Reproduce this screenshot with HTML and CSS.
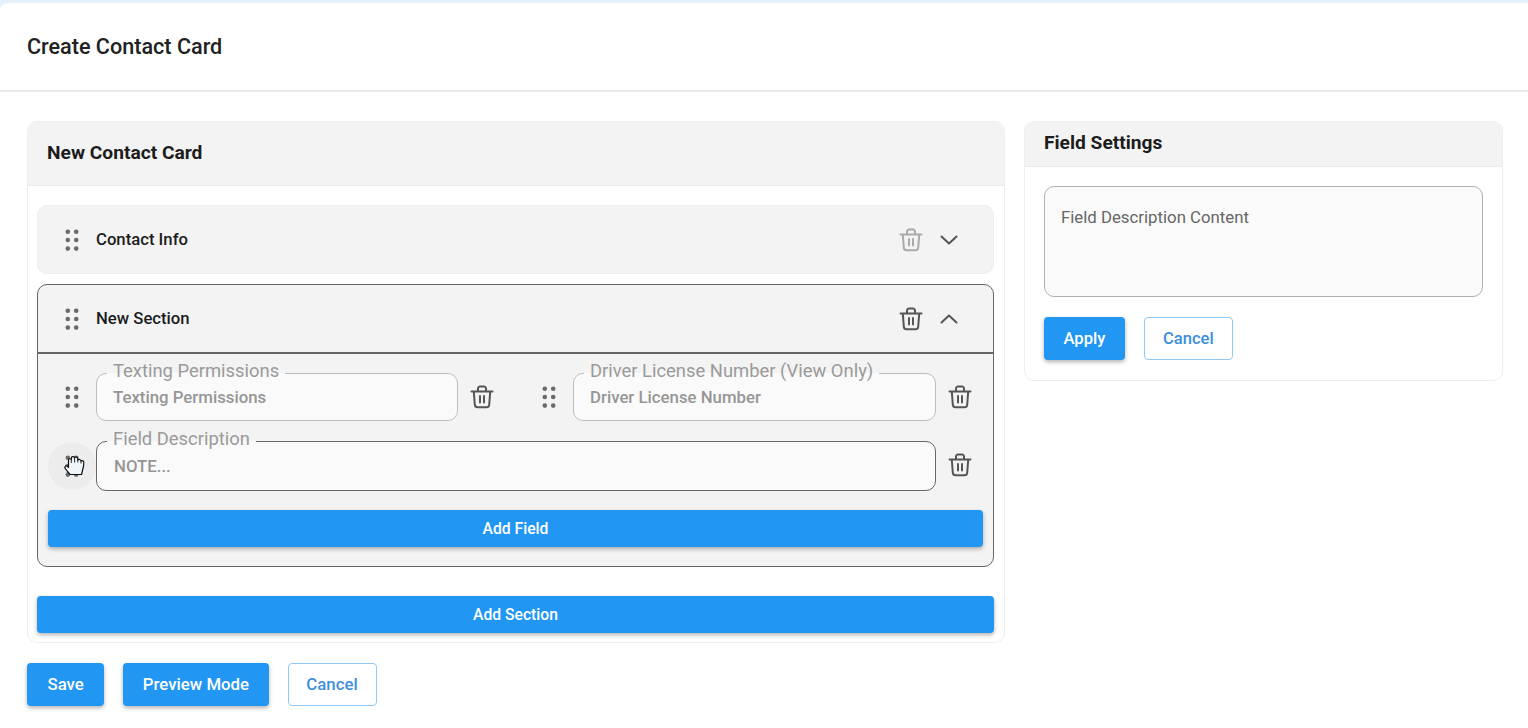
FILE: index.html
```html
<!DOCTYPE html>
<html lang="en">
<head>
<meta charset="utf-8">
<title>Create Contact Card</title>
<link rel="stylesheet" href="styles.css">
</head>
<body>
<svg class="defs" width="0" height="0" aria-hidden="true">
  <symbol id="i-drag" viewBox="0 0 16 24">
    <circle cx="3.800" cy="3.700" r="2.300"/><circle cx="12.200" cy="3.700" r="2.300"/>
    <circle cx="3.800" cy="12" r="2.300"/><circle cx="12.200" cy="12" r="2.300"/>
    <circle cx="3.800" cy="20.600" r="2.300"/><circle cx="12.200" cy="20.600" r="2.300"/>
  </symbol>
  <symbol id="i-trash" viewBox="0 0 24 24">
    <path d="M1.500 6.500h21M8 6.500V3.600A2 2 0 0 1 10 1.600h4a2 2 0 0 1 2 2v2.900M3.800 6.500l1 13.200a2.800 2.800 0 0 0 2.800 2.600h8.800a2.800 2.800 0 0 0 2.800-2.600l1-13.200M10 11v6.500M14 11v6.500" fill="none" stroke="currentColor" stroke-width="2" stroke-linecap="round" stroke-linejoin="round"/>
  </symbol>
  <symbol id="i-down" viewBox="0 0 18 12">
    <path d="M1.500 2.500 9 9.500l7.500-7" fill="none" stroke="currentColor" stroke-width="2" stroke-linecap="round" stroke-linejoin="round"/>
  </symbol>
  <symbol id="i-up" viewBox="0 0 18 12">
    <path d="M1.500 9.500 9 2.500l7.500 7" fill="none" stroke="currentColor" stroke-width="2" stroke-linecap="round" stroke-linejoin="round"/>
  </symbol>
</svg>
<div class="page">
  <header class="top"><h1 class="title">Create Contact Card</h1></header>
  <main class="content">
    <div class="columns">
      <section class="card">
        <h2 class="card-head tall">New Contact Card</h2>
        <div class="card-body">
          <div class="section">
            <div class="sec-head">
              <svg class="drag"><use href="#i-drag"/></svg>
              <span class="sec-name">Contact Info</span>
              <svg class="trash faded"><use href="#i-trash"/></svg>
              <svg class="chev"><use href="#i-down"/></svg>
            </div>
          </div>
          <div class="section open">
            <div class="sec-head">
              <svg class="drag"><use href="#i-drag"/></svg>
              <span class="sec-name">New Section</span>
              <svg class="trash"><use href="#i-trash"/></svg>
              <svg class="chev"><use href="#i-up"/></svg>
            </div>
            <div class="sec-body">
              <div class="pair">
                <div class="field-row">
                  <div class="handle"><svg class="drag"><use href="#i-drag"/></svg></div>
                  <fieldset class="field">
                    <legend>Texting Permissions</legend>
                    <div class="value">Texting Permissions</div>
                  </fieldset>
                  <div class="remove"><svg class="trash"><use href="#i-trash"/></svg></div>
                </div>
                <div class="field-row">
                  <div class="handle"><svg class="drag"><use href="#i-drag"/></svg></div>
                  <fieldset class="field">
                    <legend>Driver License Number (View Only)</legend>
                    <div class="value">Driver License Number</div>
                  </fieldset>
                  <div class="remove"><svg class="trash"><use href="#i-trash"/></svg></div>
                </div>
              </div>
              <div class="field-row wide">
                <div class="handle active">
                  <svg class="drag"><use href="#i-drag"/></svg>
                  <svg class="hand" viewBox="0 0 22 22">
                    <path d="M6 20.500 3.500 17.500 1.200 14.300c-.8-1.200.2-2.800 1.600-2.300L4.500 13.300V6c0-1.500 2.200-1.700 2.800-.4V4c0-1.700 3-1.900 3.300-.1.500-1.400 3.200-1.100 3.200.7v1.400c.8-1 3-.6 3.200 1 .9-.6 2.800-.2 2.800 1.500 0 3-.3 5-1.200 7.500l-1 4.500z" fill="#eef5fb" stroke="#111" stroke-width="1.200" stroke-linejoin="round"/>
                    <path d="M7.300 5.600V9M10.600 3.900V8.500M13.800 5V8.500M17 6.500V9.500" fill="none" stroke="#111" stroke-width=".9"/>
                  </svg>
                </div>
                <fieldset class="field dark">
                  <legend>Field Description</legend>
                  <div class="value">NOTE...</div>
                </fieldset>
                <div class="remove"><svg class="trash"><use href="#i-trash"/></svg></div>
              </div>
              <button class="btn full inner-add" type="button">Add Field</button>
            </div>
          </div>
          <button class="btn full add-section" type="button">Add Section</button>
        </div>
      </section>
      <aside class="card side">
        <h2 class="card-head">Field Settings</h2>
        <div class="side-body">
          <textarea class="desc" aria-label="Field Description Content">Field Description Content</textarea>
          <div class="actions">
            <button class="btn" type="button">Apply</button>
            <button class="btn ghost" type="button">Cancel</button>
          </div>
        </div>
      </aside>
    </div>
    <div class="actions bottom">
      <button class="btn" type="button">Save</button>
      <button class="btn preview" type="button">Preview Mode</button>
      <button class="btn ghost" type="button">Cancel</button>
    </div>
  </main>
</div>
</body>
</html>
```
FILE: styles.css
```css
* { box-sizing: border-box; }
html, body { height: 100%; }
body {
  margin: 0;
  background: #e3f2fd;
  padding-top: 3px;
  font-family: Roboto, "Liberation Sans", sans-serif;
  color: #1c1c1c;
  overflow: hidden;
}
.defs { position: absolute; }
.page {
  background: #fff;
  border-top-left-radius: 8px;
  min-height: 725px;
}
.top {
  height: 89px;
  border-bottom: 2px solid #e9e9e9;
  padding: 0 27px 1px;
  display: flex;
  align-items: center;
}
.title { margin: 0; font-size: 21.600px; font-weight: 500; color: #212121; }
.content { padding: 29px 25px 0 27px; }
.columns {
  display: grid;
  grid-template-columns: 978px 479px;
  gap: 19px;
  align-items: start;
}
.card {
  border: 1px solid #eeeeee;
  border-radius: 10px;
  overflow: hidden;
  background: #fff;
}
.card-head {
  margin: 0;
  height: 45px;
  padding: 0 19px 3px;
  display: flex;
  align-items: center;
  background: #f3f3f3;
  border-bottom: 1px solid #ebebeb;
  font-size: 19.200px;
  font-weight: 700;
  color: #1c1c1c;
}
.card-head.tall { height: 64px; padding-bottom: 2px; }
.card-body { padding: 19px 10px 9px 9px; }
.section {
  border: 1px solid #eeeeee;
  border-radius: 10px;
  background: #f3f3f3;
  margin-bottom: 10px;
  overflow: hidden;
}
.section.open { border-color: #666; margin-bottom: 29px; }
.sec-head {
  height: 67px;
  display: flex;
  align-items: center;
  padding-left: 26px;
}
.section.open .sec-head { border-bottom: 2px solid #666; height: 69px; }
.sec-name { flex: 1; font-size: 16.700px; font-weight: 500; margin-left: 16px; color: #1c1c1c; }
.drag { width: 16px; height: 24px; fill: #6a6a6a; display: block; flex: none; }
.trash { width: 24px; height: 24px; color: #555; display: block; flex: none; }
.trash.faded { color: #aaa; }
.chev { width: 18px; height: 12px; color: #555; display: block; flex: none; margin: 0 35px 0 17px; }
.sec-body { padding: 7px 10px 19px; }
.pair { display: grid; grid-template-columns: 457px 458px; gap: 20px; }
.field-row { display: flex; align-items: flex-end; }
.field-row.wide { margin-top: 8px; }
.handle {
  width: 48px;
  height: 48px;
  flex: none;
  display: flex;
  align-items: center;
  justify-content: center;
  position: relative;
}
.handle.active { background: #ececec; border-radius: 50%; margin-bottom: 1px; }
.hand { position: absolute; left: 16px; top: 12px; width: 22px; height: 22px; }
.remove {
  width: 47px;
  height: 48px;
  flex: none;
  display: flex;
  align-items: center;
  justify-content: center;
}
.wide .remove { margin-bottom: 2px; }
.field {
  flex: 1;
  min-width: 0;
  margin: 0;
  padding: 0 16px 10px;
  border: 1px solid #bdbdbd;
  border-radius: 10px;
  background: #fafafa;
}
.field legend {
  padding: 0 6px 4px;
  margin-left: -6px;
  font-size: 18.400px;
  line-height: 20px;
  color: #9a9a9a;
}
.value { font-size: 16.800px; line-height: 25px; font-weight: 500; color: #969696; }
.field.dark { border-color: #666; padding-bottom: 12px; }
.field.dark .value { padding-top: 1px; padding-left: 1px; line-height: 24px; }
.btn {
  height: 43px;
  padding: 0 19.500px;
  border: 0;
  border-radius: 4px;
  background: #2196f3;
  color: #fff;
  font: 500 16.600px Roboto, "Liberation Sans", sans-serif;
  box-shadow: 0 2px 4px rgba(0, 0, 0, .3);
}
.btn.full { display: block; width: 100%; height: 37px; font-size: 15.700px; }
.inner-add { margin-top: 19px; }
.btn.ghost {
  background: #fff;
  color: #3d8fdc;
  border: 1px solid #90caf9;
  box-shadow: none;
  padding: 0 18px;
}
.side-body { padding: 19px 19px 20px; }
.desc {
  display: block;
  width: 100%;
  height: 111px;
  resize: none;
  padding: 19px 16px;
  border: 1px solid #b0b0b0;
  border-radius: 10px;
  background: #fafafa;
  color: #666;
  font: 400 16.800px/22px Roboto, "Liberation Sans", sans-serif;
  outline: none;
}
.actions { display: flex; gap: 19px; margin-top: 20px; }
.bottom { margin-top: 20px; }
.bottom .btn { font-size: 16.800px; padding: 0 20.500px 1px; }
.bottom .btn.preview { padding: 0 19.500px 1px; }
.bottom .btn.ghost { padding: 0 17.800px 1px; }
```
